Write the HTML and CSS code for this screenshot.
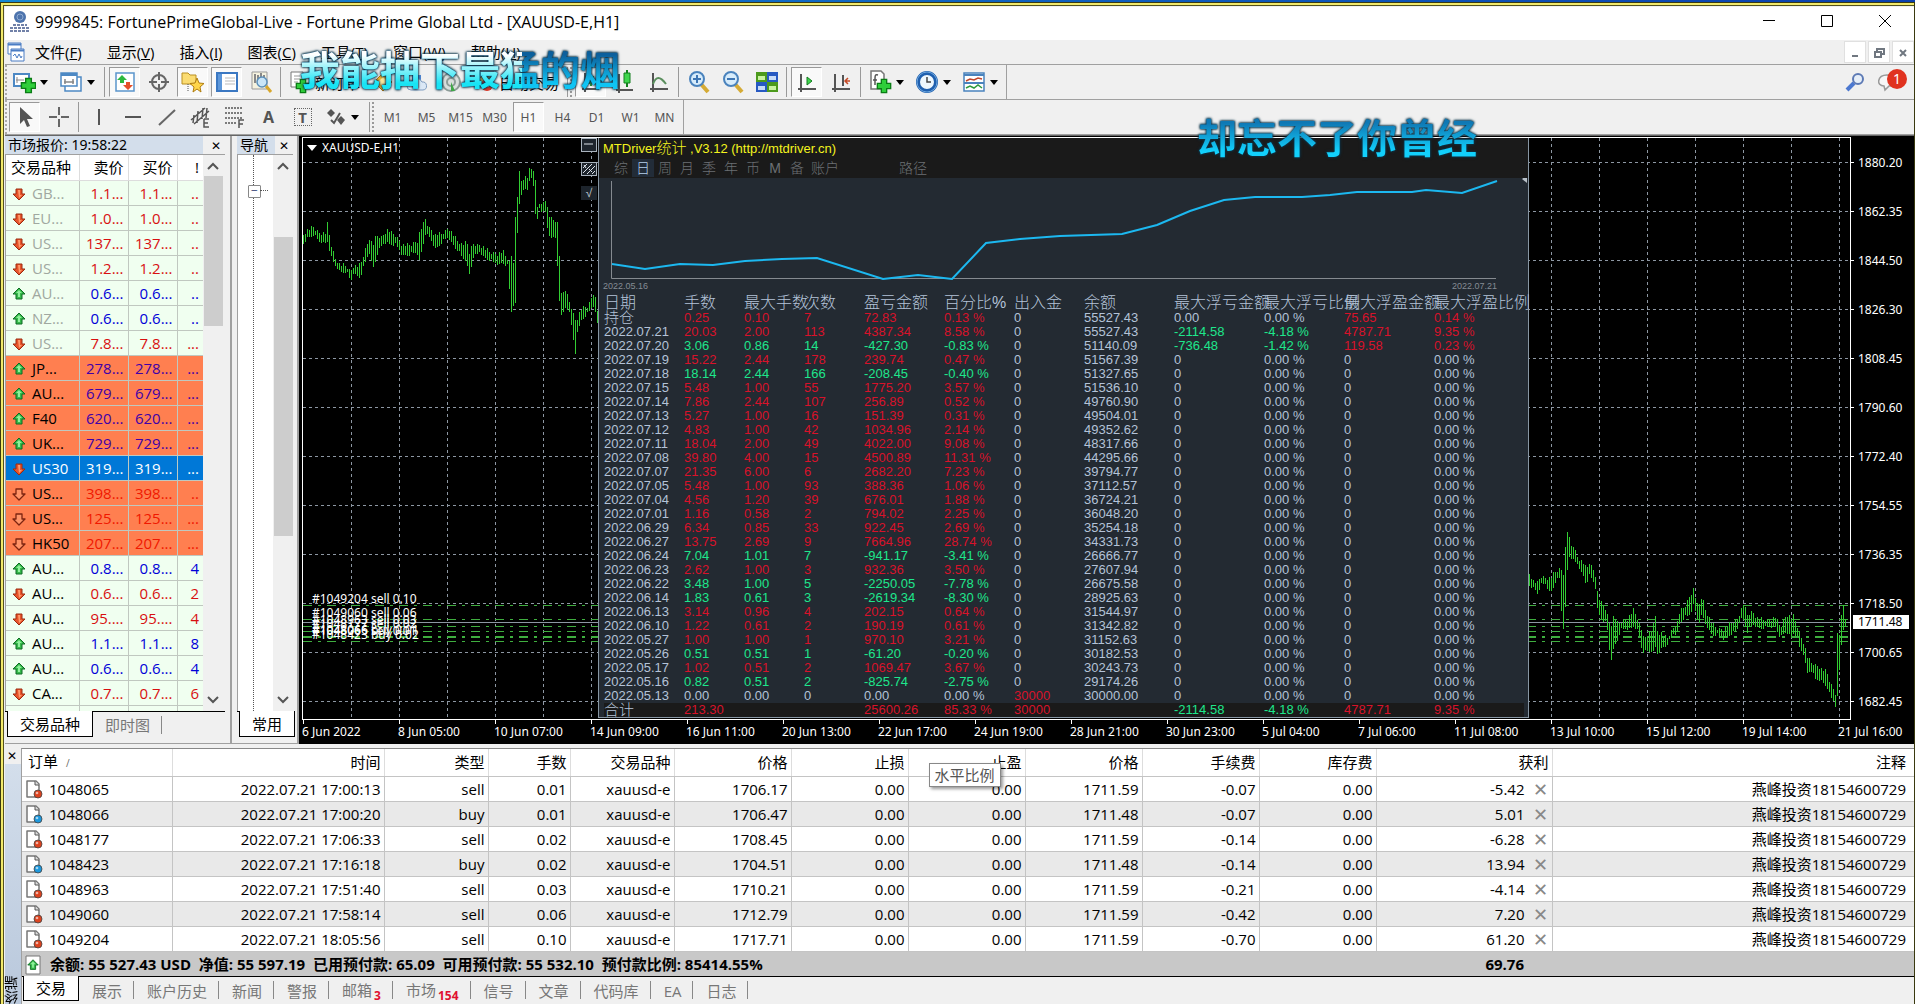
FILE: index.html
```html
<!DOCTYPE html>
<html lang="zh-CN">
  <head>
    <meta charset="UTF-8" />
    <meta name="viewport" content="width=device-width, initial-scale=1.0" />
    <title>9999845: FortunePrimeGlobal-Live</title>
    <link rel="stylesheet" href="styles.css" />
  </head>
  <body>
    <!-- shared icons -->
    <svg class="sprite" aria-hidden="true">
      <symbol id="i-up" viewBox="0 0 16 16">
        <path d="M8 2l6 6h-3v5H5V8H2z" fill="#35b94a" stroke="#0d6b22" stroke-linejoin="round" />
        <path d="M8 4l3 3H9v4H7V7H5z" fill="#8ff09b" />
      </symbol>
      <symbol id="i-down" viewBox="0 0 16 16">
        <path d="M5 3h6v5h3l-6 6-6-6h3z" fill="#e8552b" stroke="#9c2b10" stroke-linejoin="round" />
        <path d="M7 4h2v5h2l-3 3z" fill="#ff9a6c" />
      </symbol>
      <symbol id="i-down-hollow" viewBox="0 0 16 16">
        <path d="M5 3h6v5h3l-6 6-6-6h3z" fill="#ff9468" stroke="#7d2410" stroke-width="1.3" stroke-linejoin="round" />
      </symbol>
      <symbol id="i-doc" viewBox="0 0 20 20">
        <path d="M3 2h9l3 3v13H3z" fill="#fff" stroke="#777" stroke-width="1.5" stroke-linejoin="round" />
        <path d="M11 2v4h4" fill="#ddd" stroke="#555" />
        <circle cx="14" cy="15" r="4" fill="currentColor" stroke="#444" stroke-width=".8" />
        <circle cx="13" cy="14" r="1.3" fill="#fff" opacity=".6" />
      </symbol>
      <symbol id="i-plus" viewBox="0 0 12 12">
        <path d="M4 1h4v3h3v4H8v3H4V8H1V4h3z" fill="#2fce3a" stroke="#0b7d16" />
      </symbol>
    </svg>

    <div class="window">
      <header class="titlebar">
        <svg class="app-icon" width="22" height="24" viewBox="0 0 22 24">
          <circle cx="11" cy="7" r="6" fill="#4d74ad" />
          <circle cx="11" cy="7" r="3" fill="none" stroke="#8fabd2" />
          <path d="M4 15h14M1 18h20M1 21h20" stroke="#7181a8" stroke-width="2" stroke-dasharray="3 1" />
        </svg>
        <h1>9999845: FortunePrimeGlobal-Live - Fortune Prime Global Ltd - [XAUUSD-E,H1]</h1>
        <div class="win-buttons">
          <button aria-label="Minimize"><svg width="14" height="14"><path d="M1 6.5h12" /></svg></button>
          <button aria-label="Maximize"><svg width="14" height="14"><path d="M1.5 1.500h11v11h-11z" /></svg></button>
          <button aria-label="Close"><svg width="14" height="14"><path d="M1 1l12 12M13 1L1 13" /></svg></button>
        </div>
      </header>

      <nav class="menubar">
        <svg width="20" height="20" viewBox="0 0 20 20" fill="#fff" stroke="#4b7dc4">
          <path d="M1 1h13v11H1z" /><path d="M1 2.500h13" stroke-width="2" />
          <path d="M4 7h13v12H4z" /><path d="M4 8.500h13" stroke-width="2" />
          <path d="M6 14l2-2 2 4 2-4 2 4 1-2" fill="none" />
        </svg>
        <button>文件(<u>F</u>)</button>
        <button>显示(<u>V</u>)</button>
        <button>插入(<u>I</u>)</button>
        <button>图表(<u>C</u>)</button>
        <button>工具(<u>T</u>)</button>
        <button>窗口(<u>W</u>)</button>
        <button>帮助(<u>H</u>)</button>
        <div class="mdi-buttons">
          <button aria-label="Minimize chart"><svg width="12" height="12"><path d="M3 9h6" /></svg></button>
          <button aria-label="Restore chart"><svg width="12" height="12"><path d="M4 4V2h7v5H9M2 5h6v5H2z" stroke-width="1.5" /></svg></button>
          <button aria-label="Close chart"><svg width="12" height="12"><path d="M3 3l6 6M9 3l-6 6" /></svg></button>
        </div>
      </nav>

      <div class="toolbar">
        <div class="bar">
          <button class="tool drop" aria-label="New chart">
            <svg width="24" height="24" viewBox="0 0 24 24"><path d="M2 4h15v12H2z" fill="#fff" stroke="#4d89c4" stroke-width="2" /><path d="M5 7v6M4 10h8" stroke="#888" /><use href="#i-plus" x="8" y="7" width="17" height="17" /></svg>
          </button>
          <button class="tool drop" aria-label="Profiles">
            <svg width="24" height="24" viewBox="0 0 24 24" fill="#fff" stroke="#4d89c4" stroke-width="1.500"><path d="M6 7h16v14H6z" /><path d="M2 3h16v13H2z" /><path d="M2 4.500h16" stroke-width="3" /><path d="M5 12h10M6 9v5M14 9v5" stroke="#888" /></svg>
          </button>
          <span class="sep"></span>
          <button class="tool pressed" aria-label="Market watch">
            <svg width="22" height="22" viewBox="0 0 22 22"><path d="M2 2h18v18H2z" fill="#fff" stroke="#5b95cc" stroke-width="1.500" /><path d="M8 4l5 5h-3v3H6V9H3z" fill="#2db83d" /><path d="M14 19l-5-5h3v-3h4v3h3z" fill="#e5502a" /></svg>
          </button>
          <button class="tool" aria-label="Data window">
            <svg width="22" height="22" viewBox="0 0 22 22" fill="none" stroke="#666" stroke-width="2"><circle cx="11" cy="11" r="7" /><path d="M11 1v8M11 13v8M1 11h8M13 11h8" /></svg>
          </button>
          <button class="tool pressed" aria-label="Navigator">
            <svg width="24" height="24" viewBox="0 0 24 24"><path d="M1 3h6l2 2h6v9H1z" fill="#fbdc72" stroke="#b98f22" /><path d="M7 14v8" stroke="#555" stroke-dasharray="1 1" /><path d="M16 8l2 5 5 .5-4 3.500 1 5-4-3-4 3 1-5-4-3.500 5-.5z" fill="#ffd54a" stroke="#b07d10" /></svg>
          </button>
          <button class="tool pressed" aria-label="Terminal">
            <svg width="22" height="22" viewBox="0 0 22 22"><path d="M1 2h20v18H1z" fill="#fff" stroke="#3b78c2" stroke-width="2" /><path d="M2 3h4v16H2z" fill="#5d97da" /><path d="M9 7h10M9 10h10M9 13h10" stroke="#bbb" /></svg>
          </button>
          <button class="tool" aria-label="Strategy tester">
            <svg width="24" height="24" viewBox="0 0 24 24" fill="none"><path d="M3 2h15v17H3z" fill="#f5f2df" stroke="#999" /><path d="M6 4v9M9 5v5M12 3v6M15 5v4" stroke="#888" stroke-width="2" /><path d="M17 16l5 6" stroke="#d8a72b" stroke-width="3" /><circle cx="13" cy="12" r="5" fill="#c9e5f8" stroke="#5b8fb9" stroke-width="1.500" /></svg>
          </button>
          <span class="sep"></span>
          <button class="tool wide">
            <svg width="22" height="24" viewBox="0 0 22 24"><path d="M2 2h12v15H2z" fill="#fff" stroke="#777" /><path d="M5 6h6M5 9h6M5 12h4" stroke="#999" /><use href="#i-plus" x="6" y="8" width="16" height="16" /></svg>
            新订单
          </button>
          <button class="tool" aria-label="MetaEditor">
            <svg width="22" height="22" viewBox="0 0 22 22"><path d="M11 2l9 9-9 9-9-9z" fill="#f5b52c" stroke="#b7780d" /><path d="M11 6l5 5-5 5-5-5z" fill="#fde89a" /></svg>
          </button>
          <button class="tool" aria-label="Cloud">
            <svg width="22" height="22" viewBox="0 0 22 22"><path d="M6 4h9v8H6z" fill="#4f86d2" /><path d="M5 19a4 4 0 0 1 0-8 6 6 0 0 1 11 0 4 4 0 0 1 1 8z" fill="#dbe8f6" stroke="#7e9cc0" /></svg>
          </button>
          <button class="tool" aria-label="Signals">
            <svg width="22" height="22" viewBox="0 0 22 22" fill="none" stroke="#8d9c98" stroke-width="2"><circle cx="11" cy="11" r="9" fill="#d9dfdd" /><circle cx="11" cy="11" r="4" /><path d="M11 11v9h4z" fill="#40a848" stroke="none" /></svg>
          </button>
          <button class="tool wide">
            <svg width="22" height="22" viewBox="0 0 22 22"><path d="M3 9l9-5 8 4-9 6z" fill="#f1ca55" stroke="#a97f1b" /><circle cx="14" cy="14" r="6" fill="#dd3524" /><path d="M12 12h4v4h-4z" fill="#fff" /></svg>
            自动交易
          </button>
          <span class="grip"></span>
          <button class="tool pressed" aria-label="Bar chart">
            <svg width="20" height="22" viewBox="0 0 20 22" fill="none" stroke="#555" stroke-width="2"><path d="M4 2v16h14M1 18h3v3" /><path d="M10 4v11M10 6h3M7 12h3" stroke="#2a9a33" /></svg>
          </button>
          <button class="tool" aria-label="Candlesticks">
            <svg width="20" height="24" viewBox="0 0 20 24" fill="none" stroke="#555" stroke-width="2"><path d="M4 4v16h14M1 20h3v3" /><path d="M12 0v17" stroke="#137f1e" /><path d="M9 3h6v10H9z" fill="#3fd64d" stroke="#137f1e" stroke-width="1" /></svg>
          </button>
          <button class="tool" aria-label="Line chart">
            <svg width="20" height="22" viewBox="0 0 20 22" fill="none" stroke="#555" stroke-width="2"><path d="M4 2v16h15M1 18h3v3" /><path d="M4 13c3-8 7-8 13 0" stroke="#5b8f5e" /></svg>
          </button>
          <span class="sep"></span>
          <button class="tool" aria-label="Zoom in">
            <svg width="24" height="24" viewBox="0 0 24 24" fill="none"><path d="M14 14l7 8" stroke="#d5ab35" stroke-width="4" /><circle cx="10" cy="9" r="7" fill="#d7ecfb" stroke="#4a83bd" stroke-width="2" /><path d="M6 9h8M10 5v8" stroke="#3e76b4" stroke-width="2" /></svg>
          </button>
          <button class="tool" aria-label="Zoom out">
            <svg width="24" height="24" viewBox="0 0 24 24" fill="none"><path d="M14 14l7 8" stroke="#d5ab35" stroke-width="4" /><circle cx="10" cy="9" r="7" fill="#d7ecfb" stroke="#4a83bd" stroke-width="2" /><path d="M6 9h8" stroke="#3e76b4" stroke-width="2" /></svg>
          </button>
          <button class="tool" aria-label="Tile windows">
            <svg width="22" height="22" viewBox="0 0 22 22"><path d="M0 1h11v10H0zM11 11h11v10H11z" fill="#4c9a1c" /><path d="M11 1h11v10H11zM0 11h11v10H0z" fill="#2759c2" /><path d="M2 5h7v4H2z" fill="#c9f3a0" /><path d="M13 15h7v4h-7z" fill="#c9f3a0" /><path d="M13 5h7v4h-7z" fill="#c8dcf8" /><path d="M2 15h7v4H2z" fill="#c8dcf8" /></svg>
          </button>
          <span class="sep"></span>
          <button class="tool pressed" aria-label="Auto scroll">
            <svg width="20" height="22" viewBox="0 0 20 22" fill="none" stroke="#555" stroke-width="2"><path d="M4 3v15h15M1 18h3v3" /><path d="M10 6l5 4-5 4z" fill="#3fd64d" stroke="#157c20" stroke-width="1" /></svg>
          </button>
          <button class="tool" aria-label="Chart shift">
            <svg width="20" height="22" viewBox="0 0 20 22" fill="none" stroke="#555" stroke-width="2"><path d="M4 3v15h15M1 18h3v3M12 4v11" /><path d="M19 10h-4M17 7l-3 3 3 3" stroke="#c64a26" stroke-width="1.500" /></svg>
          </button>
          <span class="sep"></span>
          <button class="tool drop" aria-label="Indicators">
            <svg width="24" height="24" viewBox="0 0 24 24"><path d="M3 1h10l3 3v15H3z" fill="#fff" stroke="#777" stroke-width="1.500" /><path d="M10 5c-3-1-3 1-3 4v6M5 10h4" fill="none" stroke="#555" stroke-width="1.500" /><use href="#i-plus" x="8" y="8" width="16" height="16" /></svg>
          </button>
          <button class="tool drop" aria-label="Periods">
            <svg width="24" height="24" viewBox="0 0 24 24" fill="none"><circle cx="12" cy="12" r="9" fill="#eef7fd" stroke="#1f5fae" stroke-width="4" /><circle cx="12" cy="12" r="10" stroke="#6ea8e0" /><path d="M12 7v5h4" stroke="#444" stroke-width="1.500" /></svg>
          </button>
          <button class="tool drop" aria-label="Templates">
            <svg width="24" height="24" viewBox="0 0 24 24" fill="none"><path d="M2 3h20v18H2z" fill="#fff" stroke="#4a83bd" stroke-width="1.500" /><path d="M2 5h20M2 13h20" stroke="#4a83bd" stroke-width="2" /><path d="M4 11l4-2 4 1 4-2 4 1" stroke="#c2452a" stroke-width="1.500" /><path d="M4 18l4-2 4 2 4-3 4 3" stroke="#2e9a3c" stroke-width="1.500" /></svg>
          </button>
        </div>
        <div class="bar-right">
          <button class="tool" aria-label="Search">
            <svg width="22" height="22" viewBox="0 0 22 22" fill="none"><path d="M9 12l-7 7" stroke="#4c78d0" stroke-width="4" /><circle cx="13" cy="8" r="5" fill="#e6eef8" stroke="#5d7ab5" stroke-width="2" /></svg>
          </button>
          <button class="tool messages" aria-label="Messages">
            <svg width="24" height="22" viewBox="0 0 24 22"><path d="M9 4c-10 0-11 11-3 11l1 4 4-4c9 0 9-11-2-11z" fill="#f6f6f6" stroke="#999" stroke-width="1.500" /></svg>
            <span class="badge">1</span>
          </button>
        </div>
      </div>

      <div class="toolbar drawing">
        <div class="bar">
          <button class="tool pressed" aria-label="Cursor"><svg width="22" height="24" viewBox="0 0 22 24"><path d="M6 2v17l4-4 3 7 3-1-3-7h6z" fill="#555" /></svg></button>
          <button class="tool" aria-label="Crosshair"><svg width="22" height="22"><path d="M11 1v8M11 13v8M1 11h8M13 11h8" stroke="#666" stroke-width="2" /></svg></button>
          <span class="sep"></span>
          <button class="tool" aria-label="Vertical line"><svg width="22" height="22"><path d="M11 3v16" stroke="#555" stroke-width="2" /></svg></button>
          <button class="tool" aria-label="Horizontal line"><svg width="22" height="22"><path d="M3 11h16" stroke="#555" stroke-width="2" /></svg></button>
          <button class="tool" aria-label="Trendline"><svg width="22" height="22"><path d="M3 19L19 4" stroke="#666" stroke-width="2" /></svg></button>
          <button class="tool" aria-label="Channel"><svg width="24" height="24" fill="none" stroke="#555" stroke-width="1.500"><path d="M2 15L16 3M5 19L20 6M5 10l-1 8M9 6l-1 12M14 3l-1 11M18 3l-1 10M15 14v8h5M15 18h4M15 14h5" /></svg></button>
          <button class="tool" aria-label="Fibonacci"><svg width="24" height="24" fill="none" stroke="#555" stroke-width="1.500"><path d="M2 3h18M2 8h18M2 13h18M2 18h12" stroke-dasharray="2 1" /><path d="M16 23v-8h5M16 19h4" /></svg></button>
          <button class="tool letter">A</button>
          <button class="tool boxed"><span>T</span></button>
          <button class="tool drop" aria-label="Arrows"><svg width="22" height="22" fill="#555"><path d="M6 3l4 4-4 4-4-4zM16 10l4 4-4 5-4-5z" /><path d="M6 14l3 3 6-10" fill="none" stroke="#555" stroke-width="2" /></svg></button>
          <span class="grip"></span>
          <button class="tool">M1</button>
          <button class="tool">M5</button>
          <button class="tool">M15</button>
          <button class="tool">M30</button>
          <button class="tool pressed">H1</button>
          <button class="tool">H4</button>
          <button class="tool">D1</button>
          <button class="tool">W1</button>
          <button class="tool">MN</button>
        </div>
      </div>

      <main class="workspace">
        <section class="panel market">
          <div class="panel-title"><h2>市场报价: 19:58:22</h2><button aria-label="Close">✕</button></div>
          <div class="panel-body">
            <div class="market-list">
              <table>
                <colgroup><col class="c-symbol" /><col class="c-price" /><col class="c-price" /><col class="c-spread" /></colgroup>
                <thead><tr><th>交易品种</th><th>卖价</th><th>买价</th><th>!</th></tr></thead>
                <tbody id="market-rows"></tbody>
              </table>
            </div>
            <div class="scrollbar"><svg width="14" height="10"><path d="M2 8l5-5 5 5" /></svg><i class="thumb"></i><svg width="14" height="10"><path d="M2 2l5 5 5-5" /></svg></div>
          </div>
          <div class="panel-tabs"><button class="active">交易品种</button><button>即时图</button></div>
        </section>

        <section class="panel navigator">
          <div class="panel-title"><h2>导航</h2><button aria-label="Close">✕</button></div>
          <div class="panel-body">
            <div class="tree"><span class="node"></span></div>
            <div class="scrollbar"><svg width="14" height="10"><path d="M2 8l5-5 5 5" /></svg><i class="thumb"></i><svg width="14" height="10"><path d="M2 2l5 5 5-5" /></svg></div>
          </div>
          <div class="panel-tabs"><button class="active">常用</button></div>
        </section>

        <section class="chart">
          <div class="chart-top">
            <div class="plot">
              <svg class="plot-canvas" id="plot" aria-label="XAUUSD-E,H1"></svg>
              <div class="chart-name"><svg width="10" height="6"><path d="M0 0h10L5 6z" fill="#fff" /></svg>XAUUSD-E,H1</div>
              <div class="order-labels" id="order-labels"></div>

              <div class="mini-buttons">
                <button aria-label="Collapse"><svg width="14" height="12"><path d="M2 5h9" /></svg></button>
                <button aria-label="Pattern"><svg width="14" height="12"><path d="M1 5l4-4M1 10L10 1M5 11l8-8M10 11l3-3M2 2l2 3M7 6l3 3" /></svg></button>
                <button class="flat">√</button>
              </div>

              <div class="stats">
                <div class="stats-head">
                  <p>MTDriver<b>统计</b> ,V3.12 (http://mtdriver.cn)</p>
                  <div class="stats-tabs">
                    <button>综</button><button class="on">日</button><button>周</button><button>月</button><button>季</button><button>年</button><button>币</button><button>M</button><button>备</button><button class="account">账户</button><button>路径</button>
                  </div>
                </div>
                <svg class="equity" width="928" height="116" viewBox="0 0 928 116">
                  <path d="M12.500 3v97.500H897" fill="none" stroke="#858a90" />
                  <polyline points="13,86 46,91 81,86 114,87 146,83 183,81 218,80 284,101 319,97 353,101 387,65 421,61 461,58 523,56 558,47 591,33 625,22 656,19 703,19 731,17 758,14 813,14 827,12 863,15 898,3" />
                  <path d="M928 -3l-5 4 5 4z" fill="#b8c0c8" />
                  <text x="4" y="111">2022.05.16</text>
                  <text x="853" y="111">2022.07.21</text>
                </svg>
                <table>
                  <colgroup><col class="w80" /><col class="w60" /><col class="w60" /><col class="w60" /><col class="w80" /><col class="w70" /><col class="w70" /><col class="w90" /><col class="w90" /><col class="w80" /><col class="w90" /><col class="w90" /></colgroup>
                  <thead>
                    <tr><th>日期</th><th>手数</th><th>最大手数</th><th>次数</th><th>盈亏金额</th><th>百分比%</th><th>出入金</th><th>余额</th><th>最大浮亏金额</th><th>最大浮亏比例</th><th>最大浮盈金额</th><th>最大浮盈比例</th></tr>
                  </thead>
                  <tbody id="stats-rows"></tbody>
                </table>
              </div>
            </div>
            <div class="price-axis" id="price-axis"><span class="price-now">1711.48</span></div>
          </div>
          <div class="time-axis" id="time-axis"></div>
        </section>
      </main>

      <section class="terminal">
        <div class="terminal-side"><button aria-label="Close">✕</button><span>终端</span></div>
        <div class="terminal-main">
          <table class="orders">
            <colgroup><col class="o-id" /><col class="o-time" /><col class="o-type" /><col class="o-lots" /><col class="o-type" /><col class="o-num" /><col class="o-num" /><col class="o-num" /><col class="o-num" /><col class="o-num" /><col class="o-num" /><col class="o-profit" /><col /></colgroup>
            <thead>
              <tr><th>订单 <small>/</small></th><th>时间</th><th>类型</th><th>手数</th><th>交易品种</th><th>价格</th><th>止损</th><th class="take"><span class="tooltip">水平比例</span>止盈</th><th>价格</th><th>手续费</th><th>库存费</th><th>获利</th><th>注释</th></tr>
            </thead>
            <tbody id="order-rows"></tbody>
            <tfoot>
              <tr>
                <td colspan="11"><svg class="up-box" width="16" height="20" viewBox="0 0 16 20"><path d="M1 1h14v18H1z" fill="#fff" stroke="#777" /><use href="#i-up" x="1" y="3" width="14" height="14" /></svg>余额: 55 527.43 USD&nbsp; 净值: 55 597.19&nbsp; 已用预付款: 65.09&nbsp; 可用预付款: 55 532.10&nbsp; 预付款比例: 85414.55%</td>
                <td class="total">69.76</td>
                <td></td>
              </tr>
            </tfoot>
          </table>
          <div class="terminal-tabs">
            <button class="active">交易</button><button>展示</button><button>账户历史</button><button>新闻</button><button>警报</button><button>邮箱<sub>3</sub></button><button>市场<sub>154</sub></button><button>信号</button><button>文章</button><button>代码库</button><button>EA</button><button>日志</button>
          </div>
        </div>
      </section>
    </div>

    <!-- desktop lyrics float over everything -->
    <p class="lyric lyric-one">我能抽下最猛的烟</p>
    <p class="lyric lyric-two">却忘不了你曾经</p>

    <script src="script.js"></script>
  </body>
</html>
```
FILE: styles.css
```css
* {
  margin: 0;
  padding: 0;
  box-sizing: border-box;
}

body {
  min-height: 100vh;
  padding-top: 2px;
  background: linear-gradient(to right, #1487d4, #0a3fae);
  font-family: "Open Sans", "Noto Sans CJK SC", sans-serif;
  font-size: 15px;
  color: #000;
  overflow: hidden;
}

button {
  border: none;
  background: none;
  font: inherit;
  color: inherit;
}

h1,
h2 {
  font-weight: 400;
}

table {
  border-collapse: collapse;
  table-layout: fixed;
}

th {
  font-weight: 400;
}

.sprite {
  position: absolute;
  width: 0;
  height: 0;
}

.window {
  display: flex;
  flex-direction: column;
  height: calc(100vh - 2px);
  border: 1px solid #3a3a10;
  border-bottom: none;
  box-shadow: inset 2px 2px 0 #f2e96b, inset 3px 3px 0 #55521c;
  padding: 4px 0 0 4px;
  background: #f0f0f0;
}

/* title and menu */
.titlebar {
  display: flex;
  align-items: center;
  height: 33px;
  padding: 0 0 4px 4px;
  background: #fff;
}

.titlebar h1 {
  flex: 1;
  margin-left: 4px;
  font-size: 16px;
  line-height: 24px;
}

.win-buttons {
  display: flex;
}

.win-buttons button {
  width: 58px;
  height: 28px;
}

.win-buttons path {
  fill: none;
  stroke: #000;
}

.menubar {
  display: flex;
  align-items: center;
  gap: 25px;
  height: 25px;
  padding-left: 2px;
  border-bottom: 1px solid #a0a0a0;
}

.menubar > svg {
  margin-right: -17px;
}

.menubar button {
  line-height: 22px;
}

.mdi-buttons {
  display: flex;
  gap: 2px;
  margin-left: auto;
}

.mdi-buttons button {
  width: 22px;
  height: 22px;
  border: 1px solid #e0e0e0;
  background: #fff;
}

.mdi-buttons path {
  fill: none;
  stroke: #707780;
  stroke-width: 2;
}

/* toolbars */
.toolbar {
  display: flex;
  justify-content: space-between;
  height: 35px;
  border-bottom: 1px solid #a0a0a0;
}

.bar {
  display: flex;
  align-items: center;
  padding-left: 2px;
  border-left: 2px dotted #aaa;
  border-right: 1px solid #a0a0a0;
}

.tool {
  display: flex;
  align-items: center;
  justify-content: center;
  width: 31px;
  height: 30px;
  margin-right: 3px;
  font: 12px "Noto Sans", sans-serif;
  color: #555;
}

.tool.pressed {
  border: 1px solid;
  border-color: #999 #fff #fff #999;
  background: #f9f9f9;
}

.tool.drop {
  width: 47px;
  margin-right: 0;
  padding-right: 5px;
  gap: 4px;
}

.tool.drop::after {
  content: "";
  border: 4px solid transparent;
  border-top: 5px solid #000;
  border-bottom: none;
}

.tool.wide {
  width: auto;
  padding: 0 4px;
  gap: 4px;
  font: 15px "Noto Sans CJK SC", sans-serif;
  color: #000;
}

.tool.letter {
  font-size: 16px;
  font-weight: 700;
}

.tool.boxed span {
  width: 18px;
  line-height: 16px;
  border: 1px dotted #666;
  font-size: 15px;
  font-weight: 700;
}

.sep {
  width: 1px;
  height: 30px;
  margin: 0 4px 0 1px;
  background: #999;
}

.grip {
  height: 30px;
  margin: 0 3px 0 1px;
  border-left: 1px solid #999;
  border-right: 2px dotted #999;
  padding-left: 2px;
}

.bar-right {
  display: flex;
  align-items: center;
  padding-right: 6px;
}

.messages {
  position: relative;
}

.badge {
  position: absolute;
  top: 2px;
  right: -2px;
  width: 20px;
  border-radius: 50%;
  background: #e0321f;
  color: #fff;
  font-size: 14px;
  line-height: 20px;
}

/* workspace */
.workspace {
  display: flex;
  flex: 1;
  min-height: 0;
  border-top: 1px solid #666;
}

.panel {
  display: flex;
  flex-direction: column;
  padding: 0 5px 6px 0;
  border-right: 2px solid #a0a0a0;
  border-bottom: 1px solid #a0a0a0;
}

.market {
  width: 227px;
}

.navigator {
  width: 67px;
  padding: 0 4px 6px 5px;
}

.panel-title {
  display: flex;
  height: 19px;
  border-bottom: 1px solid #a0a0a0;
}

.panel-title h2 {
  flex: 1;
  background: #d3deeb;
  font: 14px/18px "Noto Sans", "Noto Sans CJK SC", sans-serif;
  padding-left: 3px;
  white-space: nowrap;
}

.panel-title button {
  width: 18px;
  font-size: 12px;
}

.market .panel-title button {
  margin-left: 4px;
}

.panel-body {
  display: flex;
  flex: 1;
  min-height: 0;
}

.market-list {
  width: 198px;
  border-left: 1px solid #a0a0a0;
  overflow: hidden;
  background: #f0fff0;
}

.market-list table {
  width: 197px;
}

.c-symbol {
  width: 73px;
}

.c-price {
  width: 49px;
}

.c-spread {
  width: 26px;
}

.market-list th,
.market-list td {
  height: 25px;
  padding-right: 4px;
  border-right: 1px solid #c0c8c0;
  border-bottom: 1px solid #c0c8c0;
  line-height: 22px;
  text-align: right;
  white-space: nowrap;
  overflow: hidden;
}

.market-list th {
  background: #fff;
  border-color: #ddd;
}

.market-list th:first-child,
.market-list td:first-child {
  padding: 0 0 0 5px;
  text-align: left;
}

.market-list td svg {
  width: 16px;
  height: 16px;
  margin-right: 5px;
  vertical-align: -3px;
}

.market-list th:last-child,
.market-list td:last-child {
  border-right: none;
}

.up {
  color: #0000d8;
}

.down {
  color: #d81010;
}

.market-list .symbol {
  color: #000;
}

.market-list .dim .symbol {
  color: #a0a8a0;
}

.hot {
  background: #ff7f50;
}

.hot .up {
  color: #4000a8;
}

.hot .down {
  color: #f01800;
}

.picked {
  background: #0078d7;
}

.picked td,
.market-list .picked .symbol {
  color: #fff;
}

.scrollbar {
  display: flex;
  flex-direction: column;
  align-items: center;
  justify-content: space-between;
  width: 20px;
  padding: 6px 0;
  background: #f0f0f0;
}

.scrollbar path {
  fill: none;
  stroke: #555;
  stroke-width: 2;
}

.thumb {
  width: 19px;
  height: 150px;
  margin: 5px 0 auto;
  background: #cdcdcd;
}

.navigator .thumb {
  height: 299px;
  margin-top: 66px;
}

.tree {
  flex: 1;
  border-left: 1px solid #a0a0a0;
  background: #fff;
  padding-left: 15px;
}

.node {
  display: block;
  position: relative;
  height: 100%;
  border-left: 1px dotted #555;
}

.node::before {
  content: "−";
  position: absolute;
  top: 30px;
  left: -6px;
  width: 11px;
  height: 11px;
  border: 1px solid #888;
  border-radius: 1px;
  background: #fff;
  color: #347;
  font-size: 12px;
  line-height: 9px;
  text-align: center;
}

.node::after {
  content: "";
  position: absolute;
  top: 35px;
  left: 6px;
  width: 8px;
  border-top: 1px dotted #555;
}

.panel-tabs {
  display: flex;
  height: 26px;
  border-top: 1px solid #000;
}

.panel-tabs button {
  padding: 0 12px;
  color: #777;
  white-space: nowrap;
  background: linear-gradient(#888, #888) right 4px / 1px 18px no-repeat;
}

.panel-tabs button.active {
  margin: -1px 0 0 2px;
  border: 1px solid #000;
  border-top: none;
  background: #fff;
  color: #000;
}

/* price chart */
.chart {
  display: flex;
  flex: 1;
  flex-direction: column;
  min-width: 0;
  padding: 1px 0 0 3px;
  background: #000;
  color: #fff;
  font: 12px "Noto Sans", sans-serif;
}

.chart-top {
  display: flex;
  flex: 1;
  min-height: 0;
}

.plot {
  position: relative;
  flex: 1;
  border: 1px solid #fff;
}

.plot-canvas {
  display: block;
  width: 100%;
  height: 100%;
}

.plot-canvas path {
  fill: none;
  shape-rendering: crispEdges;
}

.grid {
  stroke: #8d97a3;
  stroke-dasharray: 3 3;
}

.bars {
  stroke: #32cd32;
}

.orders-line {
  stroke: #3fae3f;
  stroke-dasharray: 9 6 3 6;
}

.orders-line.double {
  stroke-width: 2;
}

.bid {
  stroke: #8d97a3;
}

.chart-name {
  position: absolute;
  top: 1px;
  left: 4px;
  display: flex;
  align-items: center;
  gap: 5px;
}

.order-labels span {
  position: absolute;
  left: 9px;
  line-height: 16px;
}

.mini-buttons {
  position: absolute;
  top: 0;
  left: 278px;
  display: flex;
  flex-direction: column;
  gap: 10px;
}

.mini-buttons button {
  width: 16px;
  height: 14px;
  border: 1px solid #a9b3bd;
  background: #1d242c;
  line-height: 10px;
}

.mini-buttons .flat {
  border-color: #1d242c;
  color: #c0c8d0;
}

.mini-buttons path {
  stroke: #dde3ea;
  shape-rendering: auto;
}

.price-axis {
  position: relative;
  width: 63px;
  padding-top: 1px;
}

.price-axis p {
  height: 49px;
  line-height: 49px;
  padding-left: 7px;
  background: linear-gradient(#fff, #fff) 0 24px / 3px 1px no-repeat;
}

.price-now {
  position: absolute;
  top: 478px;
  left: 2px;
  width: 56px;
  padding-left: 5px;
  background: #fff;
  color: #000;
  line-height: 14px;
}

.time-axis {
  display: flex;
  height: 24px;
  overflow: hidden;
}

.time-axis span {
  flex: none;
  width: 96px;
  line-height: 23px;
  white-space: nowrap;
  background: linear-gradient(#fff, #fff) 1px 0 / 1px 4px no-repeat;
}

/* statistics overlay */
.stats {
  position: absolute;
  top: 0;
  left: 295px;
  width: 931px;
  border: 1px solid #8796a3;
  border-top: none;
  background: #232a32;
  font-family: "Liberation Sans", "Noto Sans CJK SC", sans-serif;
  font-size: 13px;
  color: #b4c3d8;
}

.stats-head {
  height: 40px;
  padding-left: 4px;
  background: #1a1a1a;
}

.stats-head p {
  line-height: 20px;
  color: #f4f41e;
}

.stats-head b {
  font-size: 15px;
  font-weight: 300;
}

.stats-tabs {
  display: flex;
  padding-left: 7px;
}

.stats-tabs button {
  width: 22px;
  color: #6c7074;
  font-size: 14px;
  font-weight: 300;
  line-height: 18px;
}

.stats-tabs .on {
  background: #222c38;
  color: #b4d0ec;
}

.stats-tabs .account {
  margin-right: 54px;
}

.stats-tabs button:nth-last-child(-n + 2) {
  width: 34px;
  white-space: nowrap;
}

.equity {
  display: block;
}

.equity polyline {
  fill: none;
  stroke: #1cb8f0;
  stroke-width: 2;
}

.equity text {
  fill: #858c94;
  font-size: 9px;
}

.stats table {
  width: 920px;
  margin-left: 5px;
}

.stats th {
  height: 17px;
  font-size: 16px;
  font-weight: 300;
  line-height: 17px;
  text-align: left;
  white-space: nowrap;
}

.stats td {
  height: 14px;
  line-height: 14px;
  white-space: nowrap;
}

.stats td.cn {
  font-size: 15px;
  font-weight: 300;
}

.stats tbody tr:last-child {
  background: #1a1a1a;
}

.w60 {
  width: 60px;
}

.w70 {
  width: 70px;
}

.w80 {
  width: 80px;
}

.w90 {
  width: 90px;
}

.gain {
  color: #d8122a;
}

.loss {
  color: #1ee68c;
}

/* terminal */
.terminal {
  display: flex;
  margin-top: 4px;
}

.terminal-side {
  display: flex;
  flex-direction: column;
  align-items: center;
  width: 16px;
  padding-right: 2px;
  background: linear-gradient(#f0f0f0 16px, #d3deeb 16px, #b9c8dc);
}

.terminal-side button {
  height: 16px;
  font-size: 12px;
  line-height: 14px;
}

.terminal-side span {
  margin-top: auto;
  writing-mode: vertical-rl;
  transform: rotate(180deg);
  font-size: 14px;
  line-height: 14px;
}

.terminal-main {
  flex: 1;
  min-width: 0;
  border-top: 1px solid #888;
  border-left: 1px solid #a0a0a0;
}

.orders {
  width: 100%;
  background: #fff;
}

.o-id {
  width: 150px;
}

.o-time {
  width: 212px;
}

.o-type {
  width: 104px;
}

.o-lots {
  width: 82px;
}

.o-num {
  width: 117px;
}

.o-profit {
  width: 176px;
}

.orders th,
.orders td {
  height: 25px;
  padding: 0 3px;
  border-right: 1px solid #c4c4c4;
  border-bottom: 1px solid #c4c4c4;
  line-height: 24px;
  text-align: right;
  white-space: nowrap;
}

.orders th {
  height: 26px;
  line-height: 25px;
  padding-right: 3px;
  border-right-color: #ddd;
}

.orders th:first-child,
.orders td:first-child {
  padding-left: 6px;
  text-align: left;
}

.orders small {
  margin-left: 4px;
  font-size: 10px;
  color: #666;
}

.orders tbody td:first-child {
  padding-left: 2px;
}

.orders tbody td svg {
  width: 20px;
  height: 20px;
  margin-right: 5px;
  vertical-align: -4px;
}

.orders tbody tr:nth-child(even) {
  background: #e9e9e9;
}

.orders .sell svg {
  color: #dc4420;
}

.orders .buy svg {
  color: #1e98dc;
}

.orders td:last-child,
.orders th:last-child {
  border-right: none;
  padding-right: 8px;
}

.orders td.profit {
  padding-right: 4px;
}

.orders .profit button {
  margin-left: 8px;
  color: #888;
  font-size: 18px;
  line-height: 20px;
  vertical-align: -1px;
}

.orders tfoot td {
  border: none;
  background: #c8c8c8;
  font-size: 15px;
  font-weight: 700;
}

.orders tfoot td:first-child {
  padding-left: 3px;
}

.orders td.total {
  padding-right: 28px;
}

.up-box {
  margin-right: 9px;
  vertical-align: -5px;
}

.orders .take {
  position: relative;
}

.tooltip {
  position: absolute;
  top: 14px;
  left: 20px;
  z-index: 1;
  padding: 0 5px;
  border: 1px solid #888;
  background: #fff;
  box-shadow: 2px 2px 3px rgba(0, 0, 0, 0.4);
  color: #555;
  line-height: 22px;
}

.terminal-tabs {
  display: flex;
  height: 28px;
  border-top: 1px solid #000;
}

.terminal-tabs button {
  padding: 0 12px 0 13px;
  color: #777;
  line-height: 22px;
  background: linear-gradient(#888, #888) right 4px / 1px 18px no-repeat;
}

.terminal-tabs button.active {
  height: 25px;
  margin: -1px 0 0 1px;
  padding: 0 12px;
  border: 1px solid #000;
  border-top: none;
  background: #fff;
  color: #000;
}

.terminal-tabs sub {
  margin-left: 2px;
  color: #e01030;
  font-size: 12px;
  font-weight: 700;
  line-height: 12px;
}

/* lyrics */
.lyric {
  position: absolute;
  font: 700 40px/44px "Noto Sans CJK SC", sans-serif;
  color: transparent;
  background-clip: text;
  -webkit-background-clip: text;
  filter: drop-shadow(0 0 1px #0a3348) drop-shadow(0 0 1px #0a3348);
  pointer-events: none;
}

.lyric-one {
  top: 46px;
  left: 300px;
  background-image: linear-gradient(#fff 20%, #19e4f4 85%), linear-gradient(#0c5f9c 20%, #0fc4f4 85%);
  background-size: 222px 100%, 100% 100%;
  background-repeat: no-repeat;
}

.lyric-two {
  top: 114px;
  left: 1197px;
  background-image: linear-gradient(#0f78b4 20%, #12d0fc 85%);
}
```
FILE: script.js
```js
// arrow, symbol, bid, ask, spread, row class
const market = [
  ["down", "GB...", "1.1...", "1.1...", "..", "dim"],
  ["down", "EU...", "1.0...", "1.0...", "..", "dim"],
  ["down", "US...", "137...", "137...", "..", "dim"],
  ["down", "US...", "1.2...", "1.2...", "..", "dim"],
  ["up", "AU...", "0.6...", "0.6...", "..", "dim"],
  ["up", "NZ...", "0.6...", "0.6...", "..", "dim"],
  ["down", "US...", "7.8...", "7.8...", "...", "dim"],
  ["up", "JP...", "278...", "278...", "...", "hot"],
  ["up", "AU...", "679...", "679...", "...", "hot"],
  ["up", "F40", "620...", "620...", "...", "hot"],
  ["up", "UK...", "729...", "729...", "...", "hot"],
  ["down", "US30", "319...", "319...", "...", "picked"],
  ["down-hollow", "US...", "398...", "398...", "..", "hot"],
  ["down-hollow", "US...", "125...", "125...", "...", "hot"],
  ["down-hollow", "HK50", "207...", "207...", "...", "hot"],
  ["up", "AU...", "0.8...", "0.8...", "4", ""],
  ["down", "AU...", "0.6...", "0.6...", "2", ""],
  ["down", "AU...", "95....", "95....", "4", ""],
  ["up", "AU...", "1.1...", "1.1...", "8", ""],
  ["up", "AU...", "0.6...", "0.6...", "4", ""],
  ["down", "CA...", "0.7...", "0.7...", "6", ""],
];

document.getElementById("market-rows").innerHTML =
  market
    .map(([icon, symbol, bid, ask, spread, cls]) => {
      const dir = icon === "up" ? "up" : "down";
      return `<tr class="${cls}"><td class="symbol"><svg><use href="#i-${icon}"/></svg>${symbol}</td>
        <td class="${dir}">${bid}</td><td class="${dir}">${ask}</td><td class="${dir}">${spread}</td></tr>`;
    })
    .join("") + "<tr><td></td><td></td><td></td><td></td></tr>";

// date, lots, max lots, deals, profit, percent, deposit, balance, then floating loss / profit
const stats = `持仓|0.25|0.10|7|72.83|0.13 %|0|55527.43|0.00|0.00 %|75.65|0.14 %
2022.07.21|20.03|2.00|113|4387.34|8.58 %|0|55527.43|-2114.58|-4.18 %|4787.71|9.35 %
2022.07.20|3.06|0.86|14|-427.30|-0.83 %|0|51140.09|-736.48|-1.42 %|119.58|0.23 %
2022.07.19|15.22|2.44|178|239.74|0.47 %|0|51567.39
2022.07.18|18.14|2.44|166|-208.45|-0.40 %|0|51327.65
2022.07.15|5.48|1.00|55|1775.20|3.57 %|0|51536.10
2022.07.14|7.86|2.44|107|256.89|0.52 %|0|49760.90
2022.07.13|5.27|1.00|16|151.39|0.31 %|0|49504.01
2022.07.12|4.83|1.00|42|1034.96|2.14 %|0|49352.62
2022.07.11|18.04|2.00|49|4022.00|9.08 %|0|48317.66
2022.07.08|39.80|4.00|15|4500.89|11.31 %|0|44295.66
2022.07.07|21.35|6.00|6|2682.20|7.23 %|0|39794.77
2022.07.05|5.48|1.00|93|388.36|1.06 %|0|37112.57
2022.07.04|4.56|1.20|39|676.01|1.88 %|0|36724.21
2022.07.01|1.16|0.58|2|794.02|2.25 %|0|36048.20
2022.06.29|6.34|0.85|33|922.45|2.69 %|0|35254.18
2022.06.27|13.75|2.69|9|7664.96|28.74 %|0|34331.73
2022.06.24|7.04|1.01|7|-941.17|-3.41 %|0|26666.77
2022.06.23|2.62|1.00|3|932.36|3.50 %|0|27607.94
2022.06.22|3.48|1.00|5|-2250.05|-7.78 %|0|26675.58
2022.06.14|1.83|0.61|3|-2619.34|-8.30 %|0|28925.63
2022.06.13|3.14|0.96|4|202.15|0.64 %|0|31544.97
2022.06.10|1.22|0.61|2|190.19|0.61 %|0|31342.82
2022.05.27|1.00|1.00|1|970.10|3.21 %|0|31152.63
2022.05.26|0.51|0.51|1|-61.20|-0.20 %|0|30182.53
2022.05.17|1.02|0.51|2|1069.47|3.67 %|0|30243.73
2022.05.16|0.82|0.51|2|-825.74|-2.75 %|0|29174.26
2022.05.13|0.00|0.00|0|0.00|0.00 %|30000|30000.00
合计|213.30|||25600.26|85.33 %|30000||-2114.58|-4.18 %|4787.71|9.35 %`;

function tone(value) {
  const n = parseFloat(value);
  return n > 0 ? "gain" : n < 0 ? "loss" : "";
}

document.getElementById("stats-rows").innerHTML = stats
  .split("\n")
  .map((line) => {
    const cells = line.split("|");
    if (cells.length < 12) cells.push("0", "0.00 %", "0", "0.00 %");
    const tds = cells.map((text, i) => {
      let cls = "";
      if (i === 0) cls = text.startsWith("2") ? "" : "cn";
      else if (i <= 5) cls = tone(cells[4]);
      else if (i !== 7) cls = tone(text);
      return `<td class="${cls}">${text}</td>`;
    });
    return `<tr>${tds.join("")}</tr>`;
  })
  .join("");

const orders = [
  ["1048065", "17:00:13", "sell", "0.01", "1706.17", "1711.59", "-0.07", "-5.42"],
  ["1048066", "17:00:20", "buy", "0.01", "1706.47", "1711.48", "-0.07", "5.01"],
  ["1048177", "17:06:33", "sell", "0.02", "1708.45", "1711.59", "-0.14", "-6.28"],
  ["1048423", "17:16:18", "buy", "0.02", "1704.51", "1711.48", "-0.14", "13.94"],
  ["1048963", "17:51:40", "sell", "0.03", "1710.21", "1711.59", "-0.21", "-4.14"],
  ["1049060", "17:58:14", "sell", "0.06", "1712.79", "1711.59", "-0.42", "7.20"],
  ["1049204", "18:05:56", "sell", "0.10", "1717.71", "1711.59", "-0.70", "61.20"],
];

document.getElementById("order-rows").innerHTML = orders
  .map(
    ([id, time, type, lots, open, now, fee, profit]) => `<tr class="${type}">
      <td><svg><use href="#i-doc"/></svg>${id}</td><td>2022.07.21 ${time}</td><td>${type}</td><td>${lots}</td>
      <td>xauusd-e</td><td>${open}</td><td>0.00</td><td>0.00</td><td>${now}</td><td>${fee}</td><td>0.00</td>
      <td class="profit">${profit}<button aria-label="Close order">✕</button></td><td>燕峰投资18154600729</td></tr>`
  )
  .join("");

// axes
const prices = ["1880.20", "1862.35", "1844.50", "1826.30", "1808.45", "1790.60", "1772.40", "1754.55", "1736.35", "1718.50", "1700.65", "1682.45"];
document.getElementById("price-axis").insertAdjacentHTML("afterbegin", prices.map((p) => `<p>${p}</p>`).join(""));

const times = ["6 Jun 2022", "8 Jun 05:00", "10 Jun 07:00", "14 Jun 09:00", "16 Jun 11:00", "20 Jun 13:00", "22 Jun 17:00", "24 Jun 19:00", "28 Jun 21:00", "30 Jun 23:00", "5 Jul 04:00", "7 Jul 06:00", "11 Jul 08:00", "13 Jul 10:00", "15 Jul 12:00", "19 Jul 14:00", "21 Jul 16:00"];
document.getElementById("time-axis").innerHTML = times.map((t) => `<span>${t}</span>`).join("");

// open orders written on the left edge of the chart
const labels = [
  [453, "#1049204 sell 0.10"],
  [467, "#1049060 sell 0.06"],
  [474, "#1048963 sell 0.03"],
  [478, "#1048177 sell 0.02"],
  [484, "#1048066 buy 0.01"],
  [485, "#1048065 sell 0.01"],
  [489, "#1048423 buy 0.02"],
];
document.getElementById("order-labels").innerHTML = labels
  .map(([top, text]) => `<span style="top:${top}px">${text}</span>`)
  .join("");

// x, high, low in thirds of a pixel; bars between the points are interpolated
const runs = [
  {
    dx: -13,
    dy: -8,
    points: "40,315,345 52,300,320 70,290,312 88,310,340 106,310,335 112,282,330 124,345,385 136,388,412 150,404,422 170,408,425 182,425,460 190,410,430 210,405,440 225,360,400 238,325,370 247,345,405 253,340,410 258,315,375 275,320,350 292,300,335 316,315,345 335,345,375 350,345,372 382,335,372 388,310,390 406,266,310 415,290,320 435,315,355 455,310,335 476,295,325 500,330,355 520,345,390 527,325,390 538,370,430 550,340,380 570,347,370 600,365,390 620,375,405 638,363,395 655,390,410 658,395,480 664,378,550 670,395,525 676,265,520 682,198,305 688,130,215 694,150,190 705,140,180 712,145,185 718,108,150 724,120,145 730,120,165 736,155,245 742,230,262 748,215,240 755,225,250 767,205,245 773,240,305 780,265,320 795,270,315 802,280,410 808,378,518 815,500,560 826,480,530 838,515,540 845,535,600 856,570,675 862,565,605 875,535,565 895,525,550 910,490,530 916,505,545 922,540,575",
  },
  {
    dx: 1217,
    dy: 362,
    points: "27,222,262 40,245,260 52,250,278 60,225,255 75,235,255 90,235,278 105,215,245 120,205,235 125,212,405 131,222,375 137,105,295 143,88,165 150,138,165 160,135,185 170,170,195 190,190,225 197,205,250 208,185,225 225,225,265 232,285,335 240,305,345 255,325,370 263,350,400 269,380,482 275,370,475 281,345,435 290,370,420 300,365,390 320,360,390 340,328,375 355,365,400 365,395,460 375,415,450 395,390,450 400,355,460 405,350,445 412,400,470 425,400,440 440,415,432 455,390,410 470,370,400 478,335,365 495,315,350 508,290,350 520,265,310 530,315,350 538,310,365 545,285,345 555,330,375 575,370,400 590,385,405 610,390,418 630,368,400 650,360,395 660,335,355 670,310,355 680,345,395 695,335,380 710,355,380 750,360,385 765,350,375 780,380,412 798,345,400 815,355,405 820,345,395 830,375,410 838,400,450 850,430,465 862,475,520 870,485,505 887,495,545 905,510,540 920,515,560 930,550,590 945,580,620 950,400,600 956,410,520 963,350,430 969,312,385 975,350,385",
  },
];

function barPath({ dx, dy, points }) {
  const pts = points.split(" ").map((p) => p.split(",").map(Number));
  const wobble = [0, 5, -4, 3, -6, 2, 6, -3];
  let d = "";
  let i = 0;
  let n = 0;
  for (let x = pts[0][0]; x <= pts[pts.length - 1][0]; x += 6) {
    while (i < pts.length - 2 && pts[i + 1][0] <= x) i++;
    const [x0, h0, l0] = pts[i];
    const [x1, h1, l1] = pts[i + 1];
    const t = Math.min(1, (x - x0) / (x1 - x0));
    const high = h0 + (h1 - h0) * t + wobble[n % 8];
    const low = l0 + (l1 - l0) * t + wobble[(n * 3 + 2) % 8];
    d += `M${Math.floor(x / 3 + dx) + 0.5} ${Math.round(high / 3 + dy)}V${Math.round(low / 3 + dy)}`;
    n++;
  }
  return d;
}

const plot = document.getElementById("plot");
const width = plot.clientWidth;
const height = plot.clientHeight;

function hline(y, cls) {
  return `<path class="${cls}" d="M0 ${y}H${width}"/>`;
}

let svg = "";
for (let x = 48.5; x < width; x += 48) svg += `<path class="grid" d="M${x} 0V${height}"/>`;
for (let y = 24.5; y < height; y += 49) svg += hline(y, "grid");
for (const y of [467.5, 481.5, 488.5, 493.5, 503.5]) svg += hline(y, "orders-line");
svg += hline(499, "orders-line double") + hline(484.5, "bid");
for (const run of runs) svg += `<path class="bars" d="${barPath(run)}"/>`;
plot.innerHTML = svg;
```
